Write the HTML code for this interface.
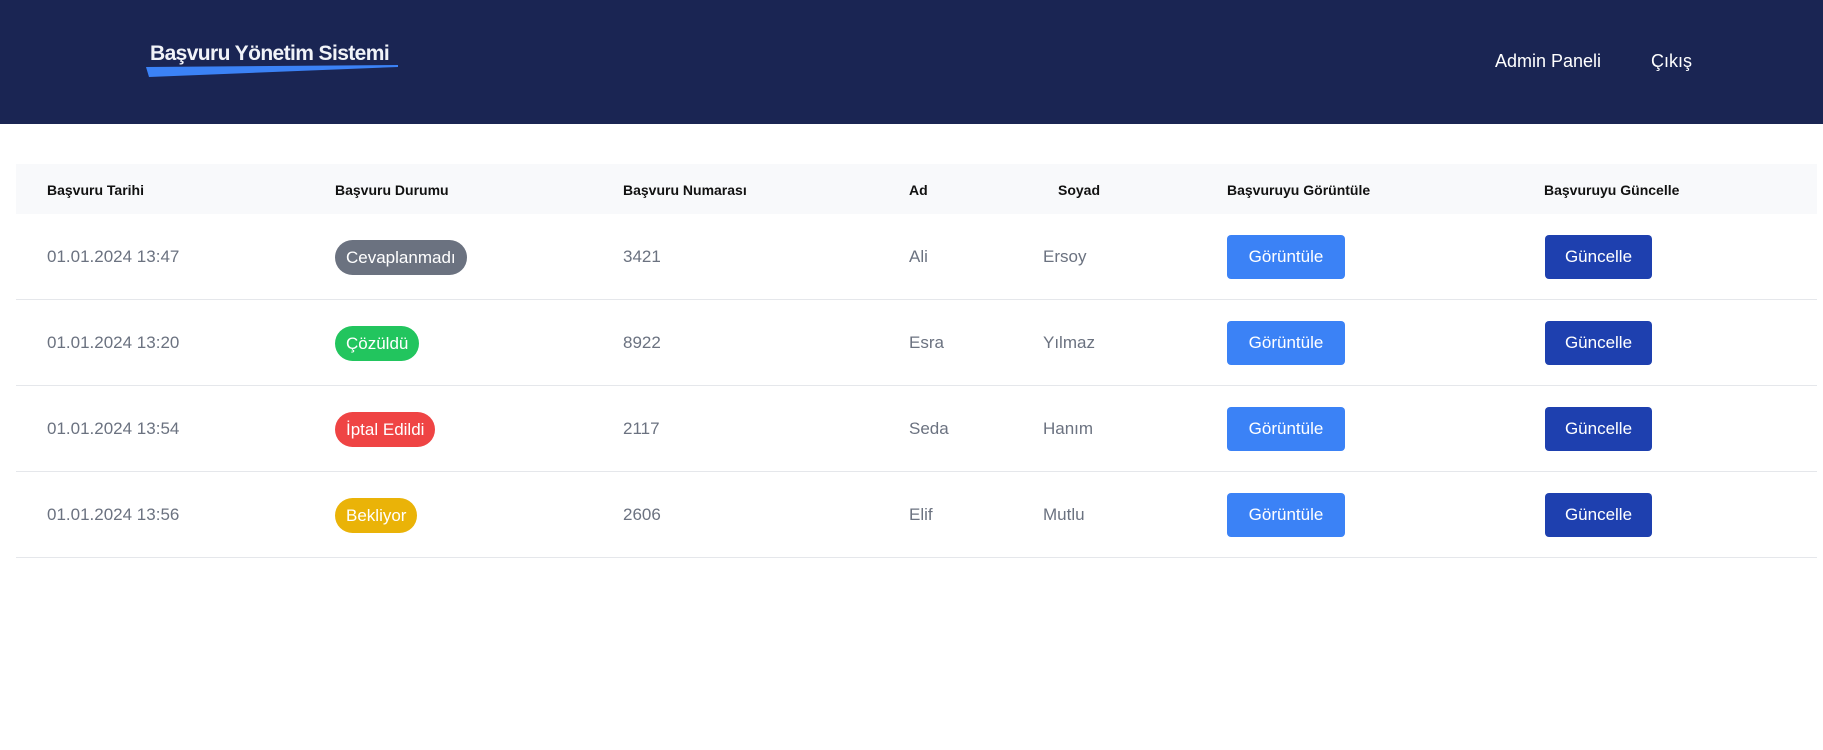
<!DOCTYPE html>
<html><head><meta charset="utf-8"><style>
*{margin:0;padding:0;box-sizing:border-box}
body{width:1823px;height:750px;background:#fff;font-family:"Liberation Sans",Arial,sans-serif;position:relative;overflow:hidden}
.hdr{position:absolute;left:0;top:0;width:1823px;height:124px;background:#1a2553}
.title{position:absolute;left:150px;top:42px;color:#f1f3f8;font-weight:bold;font-size:21px;letter-spacing:-0.6px;white-space:nowrap}
.nav{position:absolute;top:51px;color:#fff;font-size:18px}
.thead{position:absolute;left:16px;top:164px;width:1801px;height:50px;background:#f8f9fb}
.th{position:absolute;top:182px;font-size:14px;font-weight:bold;color:#111;white-space:nowrap}
.row{position:absolute;left:16px;width:1801px;border-bottom:1px solid #e5e7eb;height:86px}
.td{position:absolute;font-size:17px;color:#6b7280;white-space:nowrap}
.badge{position:absolute;height:35px;line-height:35px;padding:0 11px;border-radius:18px;color:#fff;font-size:17px;white-space:nowrap}
.btn{position:absolute;height:44px;line-height:44px;border-radius:4px;color:#fff;font-size:17px;text-align:center}
.b1{background:#3b82f6;width:118px}
.b2{background:#1e40af;width:107px}
</style></head><body>
<div class="hdr">
<svg style="position:absolute;left:0;top:0" width="500" height="124"><polygon points="146,67 398,65 398,67 149,77" fill="#3b82f6"/></svg>
<div class="title">Başvuru Yönetim Sistemi</div>
<div class="nav" style="left:1495px">Admin Paneli</div>
<div class="nav" style="left:1651px">Çıkış</div>
</div>
<div class="thead"></div>
<div class="th" style="left:47px">Başvuru Tarihi</div>
<div class="th" style="left:335px">Başvuru Durumu</div>
<div class="th" style="left:623px">Başvuru Numarası</div>
<div class="th" style="left:909px">Ad</div>
<div class="th" style="left:1058px">Soyad</div>
<div class="th" style="left:1227px">Başvuruyu Görüntüle</div>
<div class="th" style="left:1544px">Başvuruyu Güncelle</div>

<div class="row" style="top:214px"></div>
<div class="row" style="top:300px"></div>
<div class="row" style="top:386px"></div>
<div class="row" style="top:472px"></div>

<!-- row 1 -->
<div class="td" style="left:47px;top:247px">01.01.2024 13:47</div>
<div class="badge" style="left:335px;top:240px;background:#6b7280">Cevaplanmadı</div>
<div class="td" style="left:623px;top:247px">3421</div>
<div class="td" style="left:909px;top:247px">Ali</div>
<div class="td" style="left:1043px;top:247px">Ersoy</div>
<div class="btn b1" style="left:1227px;top:235px">Görüntüle</div>
<div class="btn b2" style="left:1545px;top:235px">Güncelle</div>
<!-- row 2 -->
<div class="td" style="left:47px;top:333px">01.01.2024 13:20</div>
<div class="badge" style="left:335px;top:326px;background:#22c55e">Çözüldü</div>
<div class="td" style="left:623px;top:333px">8922</div>
<div class="td" style="left:909px;top:333px">Esra</div>
<div class="td" style="left:1043px;top:333px">Yılmaz</div>
<div class="btn b1" style="left:1227px;top:321px">Görüntüle</div>
<div class="btn b2" style="left:1545px;top:321px">Güncelle</div>
<!-- row 3 -->
<div class="td" style="left:47px;top:419px">01.01.2024 13:54</div>
<div class="badge" style="left:335px;top:412px;background:#ef4444">İptal Edildi</div>
<div class="td" style="left:623px;top:419px">2117</div>
<div class="td" style="left:909px;top:419px">Seda</div>
<div class="td" style="left:1043px;top:419px">Hanım</div>
<div class="btn b1" style="left:1227px;top:407px">Görüntüle</div>
<div class="btn b2" style="left:1545px;top:407px">Güncelle</div>
<!-- row 4 -->
<div class="td" style="left:47px;top:505px">01.01.2024 13:56</div>
<div class="badge" style="left:335px;top:498px;background:#eab308">Bekliyor</div>
<div class="td" style="left:623px;top:505px">2606</div>
<div class="td" style="left:909px;top:505px">Elif</div>
<div class="td" style="left:1043px;top:505px">Mutlu</div>
<div class="btn b1" style="left:1227px;top:493px">Görüntüle</div>
<div class="btn b2" style="left:1545px;top:493px">Güncelle</div>
</body></html>
